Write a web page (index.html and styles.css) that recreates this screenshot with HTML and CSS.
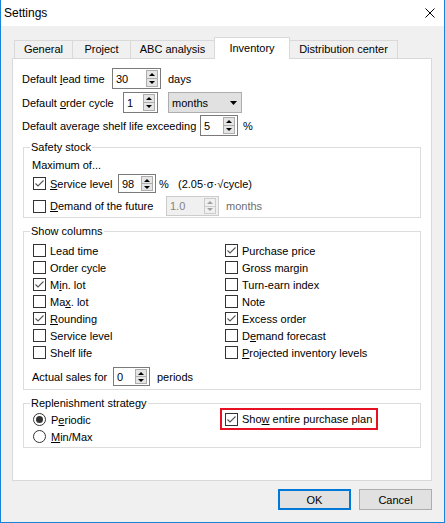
FILE: index.html
```html
<!DOCTYPE html>
<html>
<head>
<meta charset="utf-8">
<title>Settings</title>
<link rel="stylesheet" href="styles.css">
</head>
<body>
<div class="window">
  <div class="titlebar">
    <span class="title">Settings</span>
    <svg class="close" viewBox="0 0 10 10"><path d="M0.5 0.5 L9.5 9.5 M9.5 0.5 L0.5 9.5" stroke="#000" stroke-width="1" fill="none"/></svg>
  </div>
  <div class="body">
    <div class="tabs">
      <div class="tab t-general">General</div>
      <div class="tab t-project">Project</div>
      <div class="tab t-abc">ABC analysis</div>
      <div class="tab t-inv active">Inventory</div>
      <div class="tab t-dist">Distribution center</div>
    </div>
    <div class="panel">
      <div class="row">
        <span class="lbl l-lead">Default <u>l</u>ead time</span>
        <span class="spin s-lead"><span class="val">30</span><span class="arrows"><i class="up"></i><i class="dn"></i></span></span>
        <span class="after">days</span>
      </div>
      <div class="row r2">
        <span class="lbl l-cycle">Default <u>o</u>rder cycle</span>
        <span class="spin s-cycle"><span class="val">1</span><span class="arrows"><i class="up"></i><i class="dn"></i></span></span>
        <span class="combo"><span>months</span><svg class="drop" viewBox="0 0 7 4"><polygon points="0,0 7,0 3.5,4" fill="#000"/></svg></span>
      </div>
      <div class="row r3">
        <span class="lbl l-shelf">Default average shelf life exceeding</span>
        <span class="spin s-shelf"><span class="val">5</span><span class="arrows"><i class="up"></i><i class="dn"></i></span></span>
        <span class="pct">%</span>
      </div>

      <fieldset class="group safety">
        <legend>Safety stock</legend>
        <div class="maxof">Maximum of...</div>
        <div class="cbrow svc">
          <span class="cb on"><svg viewBox="0 0 11 11"><path d="M1.5 5.5 L4 8 L9.5 2.5" stroke="#555" stroke-width="1.1" fill="none"/></svg></span>
          <span class="lbl l-svc"><u>S</u>ervice level</span>
          <span class="spin s-svc"><span class="val">98</span><span class="arrows"><i class="up"></i><i class="dn"></i></span></span>
          <span class="pct2">%</span>
          <span>(2.05·σ·√cycle)</span>
        </div>
        <div class="cbrow dem">
          <span class="cb"></span>
          <span class="lbl l-dem"><u>D</u>emand of the future</span>
          <span class="spin dis s-dem"><span class="val">1.0</span><span class="arrows"><i class="up"></i><i class="dn"></i></span></span>
          <span class="after gray">months</span>
        </div>
      </fieldset>

      <fieldset class="group columns">
        <legend>Show columns</legend>
        <div class="cols">
          <div class="item"><span class="cb"></span><span>Lead time</span></div>
          <div class="item"><span class="cb"></span><span>Order cycle</span></div>
          <div class="item"><span class="cb on"><svg viewBox="0 0 11 11"><path d="M1.5 5.5 L4 8 L9.5 2.5" stroke="#555" stroke-width="1.1" fill="none"/></svg></span><span>M<u>i</u>n. lot</span></div>
          <div class="item"><span class="cb"></span><span>Ma<u>x</u>. lot</span></div>
          <div class="item"><span class="cb on"><svg viewBox="0 0 11 11"><path d="M1.5 5.5 L4 8 L9.5 2.5" stroke="#555" stroke-width="1.1" fill="none"/></svg></span><span><u>R</u>ounding</span></div>
          <div class="item"><span class="cb"></span><span>Service level</span></div>
          <div class="item"><span class="cb"></span><span>Shelf life</span></div>
          <div class="item"><span class="cb on"><svg viewBox="0 0 11 11"><path d="M1.5 5.5 L4 8 L9.5 2.5" stroke="#555" stroke-width="1.1" fill="none"/></svg></span><span>Purchase price</span></div>
          <div class="item"><span class="cb"></span><span>Gross margin</span></div>
          <div class="item"><span class="cb"></span><span>Turn-earn index</span></div>
          <div class="item"><span class="cb"></span><span>Note</span></div>
          <div class="item"><span class="cb on"><svg viewBox="0 0 11 11"><path d="M1.5 5.5 L4 8 L9.5 2.5" stroke="#555" stroke-width="1.1" fill="none"/></svg></span><span>Excess order</span></div>
          <div class="item"><span class="cb"></span><span>D<u>e</u>mand forecast</span></div>
          <div class="item"><span class="cb"></span><span><u>P</u>rojected inventory levels</span></div>
        </div>
        <div class="row sales">
          <span class="lbl l-sales">Actual sales for</span>
          <span class="spin s-sales"><span class="val">0</span><span class="arrows"><i class="up"></i><i class="dn"></i></span></span>
          <span class="after">periods</span>
        </div>
      </fieldset>

      <fieldset class="group repl">
        <legend>Replenishment strategy</legend>
        <div class="repl-body">
          <div class="radios">
            <div class="item"><span class="rb on"></span><span>P<u>e</u>riodic</span></div>
            <div class="item"><span class="rb"></span><span><u>M</u>in/Max</span></div>
          </div>
          <div class="hl">
            <span class="cb on"><svg viewBox="0 0 11 11"><path d="M1.5 5.5 L4 8 L9.5 2.5" stroke="#555" stroke-width="1.1" fill="none"/></svg></span>
            <span>Sho<u>w</u> entire purchase plan</span>
          </div>
        </div>
      </fieldset>
    </div>
    <div class="buttons">
      <div class="btn default">OK</div>
      <div class="btn">Cancel</div>
    </div>
  </div>
</div>
</body>
</html>
```

FILE: styles.css
```css
* { box-sizing: border-box; }
html, body { margin: 0; padding: 0; }
body {
  background: #fff;
  font-family: "Liberation Sans", Arial, sans-serif;
  font-size: 11px;
  color: #000;
}
u { text-underline-offset: 1px; }

.window {
  width: 445px;
  height: 523px;
  border: 1px solid #1883d7;
  border-top: none;
  background: #f0f0f0;
  display: flex;
  flex-direction: column;
}
.titlebar {
  height: 26px;
  flex: none;
  background: #fff;
  display: flex;
  align-items: center;
  justify-content: space-between;
  padding: 0 9px 0 3px;
  font-size: 12px;
}
.close { width: 10px; height: 10px; }

.body { padding: 11px 12px 0 11px; }

.tabs {
  display: flex;
  align-items: flex-end;
  height: 21px;
  padding-left: 2px;
}
.tab {
  height: 18px;
  border: 1px solid #d9d9d9;
  border-bottom: none;
  background: #f0f0f0;
  margin-left: -1px;
  text-align: center;
  line-height: 17px;
  white-space: nowrap;
}
.tab:first-child { margin-left: 0; }
.t-general { width: 59px; }
.t-project { width: 59px; }
.t-abc { width: 85px; }
.t-inv { width: 76px; }
.t-dist { width: 109px; }
.tab.active {
  height: 22px;
  background: #fff;
  margin-bottom: -1px;
  padding-top: 2px;
  position: relative;
  z-index: 1;
}

.panel {
  height: 423px;
  background: #fff;
  border: 1px solid #d9d9d9;
  padding: 9px 10px 0 9px;
}

.row {
  display: flex;
  align-items: center;
  height: 21px;
  white-space: nowrap;
}
.r2 { margin-top: 3px; }
.r3 { margin-top: 2px; }
.lbl { flex: none; white-space: nowrap; }
.l-lead { width: 90px; }
.l-cycle { width: 101px; }
.l-shelf { width: 178px; }
.l-svc { width: 68px; }
.l-dem { width: 116px; }
.l-sales { width: 81px; }
.after { margin-left: 7px; }
.gray { color: #6d6d6d; }
.pct { margin-left: 5px; }
.pct2 { margin-left: 3px; width: 19px; flex: none; }

/* spinner */
.spin {
  display: inline-flex;
  align-items: stretch;
  justify-content: space-between;
  border: 1px solid #7a7a7a;
  background: #fff;
  padding: 1px 2px 1px 3px;
  flex: none;
}
.spin .val { align-self: center; }
.arrows {
  display: flex;
  flex-direction: column;
  width: 12px;
}
.arrows i {
  flex: 1;
  border: 1px solid #adadad;
  background: #e5e5e5;
  display: flex;
  align-items: center;
  justify-content: center;
}
.arrows i + i { border-top: none; }
.arrows .up::after {
  content: "";
  width: 0; height: 0;
  border-left: 3px solid transparent;
  border-right: 3px solid transparent;
  border-bottom: 3px solid #000;
}
.arrows .dn::after {
  content: "";
  width: 0; height: 0;
  border-left: 3px solid transparent;
  border-right: 3px solid transparent;
  border-top: 3px solid #000;
}
.spin.dis { border-color: #cccccc; background: #f0f0f0; color: #838383; }
.spin.dis .arrows i { border-color: #cccccc; background: #f0f0f0; }
.spin.dis .arrows .up::after { border-bottom-color: #a0a0a0; }
.spin.dis .arrows .dn::after { border-top-color: #a0a0a0; }

.s-lead { width: 49px; height: 21px; }
.s-cycle { width: 35px; height: 21px; }
.s-shelf { width: 38px; height: 21px; }
.s-svc { width: 38px; height: 19px; }
.s-dem { width: 53px; height: 20px; }
.s-sales { width: 37px; height: 19px; }

.combo {
  display: inline-flex;
  align-items: center;
  justify-content: space-between;
  width: 74px;
  height: 21px;
  border: 1px solid #adadad;
  background: #e1e1e1;
  padding: 0 4px 0 3px;
  margin-left: 10px;
  flex: none;
}
.drop { width: 7px; height: 4px; }

/* groups */
fieldset.group {
  margin: 0 0 0 1px;
  border: 1px solid #dcdcdc;
  padding: 2px 8px 1px 8px;
  min-width: 0;
}
legend {
  padding: 0 1px;
  margin-left: -2px;
  line-height: 16px;
}
.safety { margin-top: 3px !important; }
.columns { margin-top: 5px !important; padding-top: 3px !important; padding-bottom: 3px !important; }
.repl { margin-top: 5px !important; padding-top: 0 !important; padding-bottom: 2px !important; }

.maxof { height: 16px; line-height: 16px; }
.cbrow {
  display: flex;
  align-items: center;
  white-space: nowrap;
  padding-left: 1px;
}
.cbrow .cb { margin-right: 4px; }
.svc { height: 19px; margin-top: 1px; }
.dem { height: 20px; margin-top: 3px; }

.cb {
  width: 13px;
  height: 13px;
  border: 1px solid #333;
  background: #fff;
  flex: none;
  display: inline-flex;
}
.cb svg { width: 11px; height: 11px; }

.rb {
  width: 13px;
  height: 13px;
  border: 1px solid #333;
  border-radius: 50%;
  background: #fff;
  flex: none;
  display: inline-flex;
  align-items: center;
  justify-content: center;
}
.rb.on::after {
  content: "";
  width: 7px;
  height: 7px;
  border-radius: 50%;
  background: #333;
}

.cols {
  display: grid;
  grid-template-columns: 192px 1fr;
  grid-template-rows: repeat(7, 17px);
  grid-auto-flow: column;
  padding-left: 1px;
}
.item {
  display: flex;
  align-items: center;
  gap: 4px;
  white-space: nowrap;
  height: 17px;
}
.sales { height: 19px; margin-top: 6px; }

.repl-body { display: flex; }
.radios { width: 187px; margin-left: 1px; flex: none; }
.radios .item { gap: 5px; }
.hl {
  width: 158px;
  height: 22px;
  border: 2px solid #e81123;
  padding-left: 3px;
  display: flex;
  align-items: center;
  gap: 4px;
  margin-top: -3px;
  white-space: nowrap;
}

.buttons {
  display: flex;
  justify-content: flex-end;
  gap: 8px;
  margin-top: 8px;
}
.btn {
  width: 73px;
  height: 21px;
  border: 1px solid #adadad;
  background: #e1e1e1;
  display: flex;
  align-items: center;
  justify-content: center;
}
.btn.default { border: 2px solid #0078d7; }
```
